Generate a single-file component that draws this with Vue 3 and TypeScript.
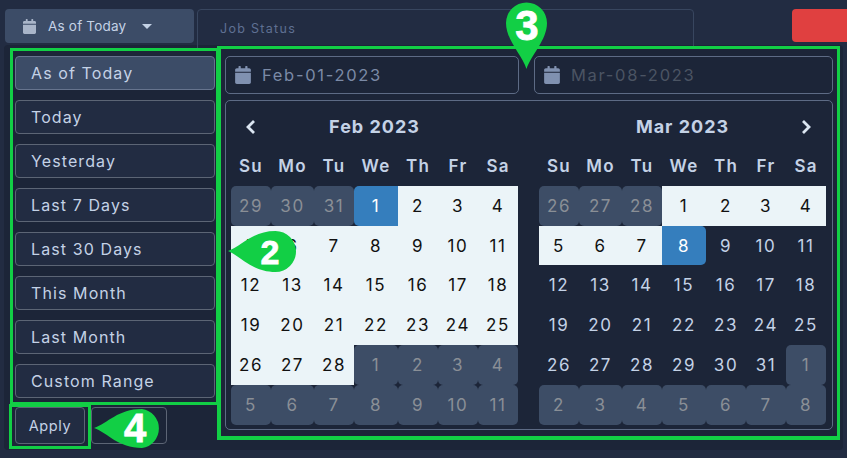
<script setup lang="ts">
interface DayCell { label: number; kind: string }

const presets: string[] = ['As of Today', 'Today', 'Yesterday', 'Last 7 Days', 'Last 30 Days', 'This Month', 'Last Month', 'Custom Range']
const weekdays: string[] = ['Su', 'Mo', 'Tu', 'We', 'Th', 'Fr', 'Sa']

function build(prev: number[], count: number, next: number[], start: number, end: number): DayCell[] {
  const cells: DayCell[] = prev.map((label) => ({ label, kind: 'off' }))
  for (let d = 1; d <= count; d++) {
    let kind = 'out'
    if (d === start) kind = 'start'
    else if (d === end) kind = 'end'
    else if (d > start && d < end) kind = 'in'
    cells.push({ label: d, kind })
  }
  next.forEach((label) => cells.push({ label, kind: 'off' }))
  return cells
}

const months = [
  { title: 'Feb 2023', cells: build([29, 30, 31], 28, [1, 2, 3, 4, 5, 6, 7, 8, 9, 10, 11], 1, 99) },
  { title: 'Mar 2023', cells: build([26, 27, 28], 31, [1, 2, 3, 4, 5, 6, 7, 8], 0, 8) }
]
const calPath = 'M0 464c0 26.5 21.5 48 48 48h352c26.5 0 48-21.5 48-48V192H0v272zM400 64h-48V16c0-8.8-7.2-16-16-16h-32c-8.8 0-16 7.2-16 16v48H160V16c0-8.8-7.2-16-16-16h-32c-8.8 0-16 7.2-16 16v48H48C21.5 64 0 85.5 0 112v48h448v-48c0-26.5-21.5-48-48-48z'
</script>

<template>
  <div class="page">
    <header class="topbar">
      <button class="range-btn">
        <svg class="cal-top" viewBox="0 0 448 512"><path :d="calPath" /></svg>
        <span>As of Today</span>
        <i class="caret"></i>
      </button>
      <div class="tab">Job Status</div>
      <div class="red"></div>
    </header>

    <section class="panel">
      <aside class="side">
        <button v-for="(p, i) in presets" :key="p" class="preset" :class="{ active: i === 0 }">{{ p }}</button>
        <div class="actions">
          <button class="act apply">Apply</button>
          <button class="act cancel"></button>
        </div>
      </aside>

      <div class="main">
        <div class="inputs">
          <div class="field first">
            <svg class="cal-in" viewBox="0 0 448 512"><path :d="calPath" /></svg>
            <span class="val">Feb-01-2023</span>
          </div>
          <div class="field second">
            <svg class="cal-in" viewBox="0 0 448 512"><path :d="calPath" /></svg>
            <span class="val dim">Mar-08-2023</span>
          </div>
        </div>
        <div class="cal-box">
          <div v-for="(m, mi) in months" :key="m.title" class="month">
            <div class="title">
              <svg v-if="mi === 0" class="chev" viewBox="0 0 12 16"><path d="M9 2 3 8l6 6" /></svg>
              <span>{{ m.title }}</span>
              <svg v-if="mi === 1" class="chev next" viewBox="0 0 12 16"><path d="m3 2 6 6-6 6" /></svg>
            </div>
            <div class="grid">
              <div v-for="w in weekdays" :key="w" class="wd">{{ w }}</div>
              <div v-for="(c, ci) in m.cells" :key="ci" class="day" :class="c.kind">{{ c.label }}</div>
            </div>
          </div>
        </div>
      </div>
    </section>

    <div class="mark mark-side"></div>
    <div class="mark mark-main"></div>
    <div class="mark mark-apply"></div>

    <svg class="pins" viewBox="0 0 847 458">
      <path d="M228 251 C242 246 252 231 275.500 231 A20.500 20.500 0 0 1 275.500 272 C252 272 242 257 228 251Z" />
      <text x="270" y="264" class="num n2">2</text>
      <path d="M526.500 69 C522 55 506 40 506 23 A20.500 20.500 0 0 1 547 23 C547 40 531 55 526.500 69Z" />
      <text x="527" y="40" class="num n3">3</text>
      <path d="M94 428 C108 423 118 409 142 409 A19.700 19.700 0 0 1 142 448 C118 448 108 433 94 428Z" />
      <text x="135" y="442" class="num n4">4</text>
    </svg>
  </div>
</template>

<style>
html, body { margin: 0; background: #222c42; }
</style>

<style scoped>
.page {
  position: relative;
  width: 847px;
  height: 458px;
  overflow: hidden;
  background: #222c42;
  font-family: Inter, "Liberation Sans", sans-serif;
  color: #c4d2e6;
}
button { font-family: inherit; padding: 0; cursor: pointer; }

.topbar {
  display: flex;
  height: 45px;
  box-sizing: border-box;
  padding: 9px 0 0 5px;
}
.range-btn {
  flex: none;
  display: flex;
  align-items: center;
  width: 189px;
  height: 34px;
  border: 0;
  border-radius: 4px;
  background: #3c4c67;
  color: #c4d2e6;
  font-size: 13.500px;
  letter-spacing: 0.2px;
  padding-left: 18px;
  box-sizing: border-box;
}
.cal-top { width: 13px; height: 15px; fill: #a9b5c9; margin-right: 12px; }
.caret {
  margin-left: 16px;
  border-left: 5px solid transparent;
  border-right: 5px solid transparent;
  border-top: 5px solid #c4d2e6;
}
.tab {
  flex: none;
  width: 497px;
  height: 40px;
  margin-left: 3px;
  box-sizing: border-box;
  border: 1px solid #38465f;
  border-radius: 4px 4px 0 0;
  padding: 11px 0 0 22px;
  font-size: 12.500px;
  letter-spacing: 1.3px;
  color: #5f7092;
}
.red {
  flex: none;
  width: 55px;
  height: 33px;
  margin-left: 98px;
  border-radius: 4px 0 0 4px;
  background: #e04040;
}

.panel {
  display: flex;
  gap: 10px;
  width: 839px;
  height: 405px;
  margin-left: 4px;
  box-sizing: border-box;
  padding: 11px 0 0 11px;
  background: #1c2538;
  border-radius: 4px;
}
.side { display: flex; flex-direction: column; gap: 10px; width: 200px; }
.preset {
  height: 34px;
  flex: none;
  box-sizing: border-box;
  border: 1px solid #5c6575;
  border-radius: 4px;
  background: #222c42;
  color: #c4d2e6;
  font-size: 16px;
  letter-spacing: 1.1px;
  text-align: left;
  padding-left: 15px;
}
.preset.active { background: #3c4c67; border-color: #66748e; }
.actions { display: flex; gap: 6px; margin-top: -1px; }
.act {
  height: 37px;
  box-sizing: border-box;
  border: 1px solid #5c6575;
  border-radius: 4px;
  background: #222c42;
  color: #c4d2e6;
  font-size: 14.500px;
  letter-spacing: 0.6px;
}
.apply { width: 70px; }
.cancel { width: 76px; background: transparent; }

.main { width: 608px; display: flex; flex-direction: column; gap: 6px; }
.inputs { display: flex; gap: 15px; }
.field {
  display: flex;
  align-items: center;
  height: 38px;
  box-sizing: border-box;
  border: 1px solid #5d6b85;
  border-radius: 5px;
  padding-left: 9px;
}
.first { width: 294px; }
.second { width: 299px; }
.cal-in { width: 16px; height: 18px; fill: #8091b0; margin-right: 11px; }
.val { font-size: 16.500px; letter-spacing: 1.7px; color: #7b8aa6; }
.val.dim { color: #4b5463; }

.cal-box {
  display: flex;
  gap: 21px;
  height: 330px;
  box-sizing: border-box;
  border: 1px solid #5d6b85;
  border-radius: 5px;
  padding: 5px 0 0 5px;
}
.month { width: 287px; }
.title {
  position: relative;
  height: 40px;
  display: flex;
  align-items: center;
  justify-content: center;
  font-size: 18px;
  font-weight: 700;
  letter-spacing: 1px;
  color: #c4d2e6;
}
.chev {
  position: absolute;
  left: 14px;
  top: 13px;
  width: 12px;
  height: 16px;
  fill: none;
  stroke: #dbe6f2;
  stroke-width: 2.800;
}
.chev.next { left: auto; right: 14px; }
.grid {
  display: grid;
  grid-template-columns: 40px 43px 40px 44px 40px 40px 40px;
  grid-auto-rows: 39.830px;
}
.wd {
  display: flex;
  align-items: center;
  justify-content: center;
  font-size: 17px;
  font-weight: 600;
  letter-spacing: 1.2px;
  color: #c4d2e6;
}
.day {
  display: flex;
  align-items: center;
  justify-content: center;
  font-size: 17px;
  letter-spacing: 1.6px;
  color: #c4d2e6;
}
.day.off { background: #3d4d66; color: #8a8f96; border-radius: 5px; }
.day.in, .day.out { color: #c4d2e6; }
.day.in { background: #ebf4f8; color: #111; }
.day.start { background: #357ebd; color: #fff; border-radius: 5px 0 0 5px; }
.day.end { background: #357ebd; color: #fff; border-radius: 0 5px 5px 0; }
.month:first-child .day.out { background: #ebf4f8; color: #111; }

.mark { position: absolute; box-sizing: border-box; border: 3px solid #12cf45; pointer-events: none; }
.mark-side { left: 10px; top: 48px; width: 209px; height: 357px; }
.mark-main { left: 217px; top: 46px; width: 623px; height: 394px; border-width: 3px 3px 4px 4px; }
.mark-apply { left: 9px; top: 404px; width: 82px; height: 45px; }

.pins { position: absolute; left: 0; top: 0; width: 847px; height: 458px; pointer-events: none; }
.pins path { fill: #12cf45; }
.num {
  fill: #fff;
  stroke: #fff;
  stroke-width: 0.8;
  font-family: "Liberation Sans", sans-serif;
  font-weight: 700;
  text-anchor: middle;
}
.n2 { font-size: 34px; }
.n3 { font-size: 42px; }
.n4 { font-size: 40px; }
</style>
